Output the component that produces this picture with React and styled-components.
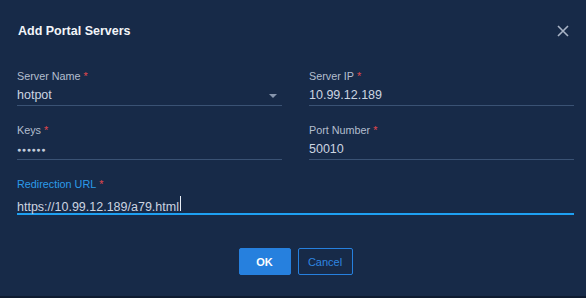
import React from 'react';
import styled, { createGlobalStyle } from 'styled-components';

const GlobalStyle = createGlobalStyle`
  html, body {
    margin: 0;
    padding: 0;
    background: #0e1b30;
  }
  body {
    font-family: "Liberation Sans", Arial, sans-serif;
  }
`;

const Dialog = styled.section`
  width: 586px;
  height: 296px;
  background: #172a48;
  box-sizing: border-box;
  display: flex;
  flex-direction: column;
`;

const Header = styled.header`
  display: flex;
  align-items: center;
  justify-content: space-between;
  padding: 21px 17px 0 18px;
  height: 20px;
`;

const Title = styled.h2`
  margin: 0;
  font-size: 12.5px;
  line-height: 20px;
  font-weight: bold;
  color: #f2f5f9;
`;

const CloseButton = styled.button`
  border: 0;
  background: none;
  padding: 0;
  width: 12px;
  height: 12px;
  display: flex;
  cursor: pointer;
  color: #a9b4c6;
`;

const Form = styled.form`
  margin: 28px 12px 0 17px;
  display: grid;
  grid-template-columns: 1fr 1fr;
  column-gap: 27px;
  row-gap: 17px;
`;

const Field = styled.div`
  display: flex;
  flex-direction: column;
  grid-column: ${(p) => (p.$wide ? '1 / -1' : 'auto')};
`;

const Label = styled.label`
  font-size: 10.8px;
  line-height: 14px;
  color: ${(p) => (p.$active ? '#2c9be8' : '#b3bece')};
`;

const Required = styled.span`
  color: #e5484d;
  margin-left: 3px;
`;

const Value = styled.div`
  height: 23px;
  box-sizing: border-box;
  padding-top: 2px;
  display: flex;
  align-items: flex-start;
  justify-content: space-between;
  font-size: 12.5px;
  line-height: 20px;
  color: #ccd4e0;
  border-bottom: 1px solid ${(p) => (p.$active ? '#1ea0f2' : '#3a5274')};
  box-shadow: ${(p) => (p.$active ? '0 1px 0 #1ea0f2' : 'none')};
`;

const Dots = styled.span`
  font-size: 7px;
  letter-spacing: 0.6px;
  line-height: 22px;
  color: #c2ccda;
`;

const Caret = styled.span`
  display: inline-block;
  width: 1px;
  height: 15px;
  margin-top: 3px;
  margin-left: 1px;
  background: #e8eef6;
`;

const Arrow = styled.span`
  width: 0;
  height: 0;
  margin: 9px 5px 0 0;
  border-left: 4px solid transparent;
  border-right: 4px solid transparent;
  border-top: 4px solid #8796ad;
`;

const Actions = styled.div`
  display: flex;
  justify-content: center;
  gap: 7px;
  margin: 34px 12px 0 17px;
`;

const Button = styled.button`
  height: 27px;
  box-sizing: border-box;
  border-radius: 2px;
  font-family: inherit;
  font-size: 11px;
  cursor: pointer;
  padding: 0;
  width: ${(p) => (p.$primary ? '52px' : '55px')};
  font-weight: ${(p) => (p.$primary ? 'bold' : 'normal')};
  color: ${(p) => (p.$primary ? '#ffffff' : '#2f86e0')};
  background: ${(p) => (p.$primary ? '#2680de' : 'transparent')};
  border: 1px solid #2680de;
`;

const CloseIcon = () => (
  <svg width="12" height="12" viewBox="0 0 12 12">
    <path d="M1 1L11 11M11 1L1 11" stroke="currentColor" strokeWidth="1.6" />
  </svg>
);

export default function App() {
  return (
    <>
      <GlobalStyle />
      <Dialog>
        <Header>
          <Title>Add Portal Servers</Title>
          <CloseButton aria-label="Close">
            <CloseIcon />
          </CloseButton>
        </Header>
        <Form>
          <Field>
            <Label>Server Name<Required>*</Required></Label>
            <Value>
              hotpot
              <Arrow />
            </Value>
          </Field>
          <Field>
            <Label>Server IP<Required>*</Required></Label>
            <Value>10.99.12.189</Value>
          </Field>
          <Field>
            <Label>Keys<Required>*</Required></Label>
            <Value><Dots>●●●●●●</Dots></Value>
          </Field>
          <Field>
            <Label>Port Number<Required>*</Required></Label>
            <Value>50010</Value>
          </Field>
          <Field $wide>
            <Label $active>Redirection URL<Required>*</Required></Label>
            <Value $active>
              <span>https://10.99.12.189/a79.html<Caret /></span>
            </Value>
          </Field>
        </Form>
        <Actions>
          <Button $primary type="button">OK</Button>
          <Button type="button">Cancel</Button>
        </Actions>
      </Dialog>
    </>
  );
}
